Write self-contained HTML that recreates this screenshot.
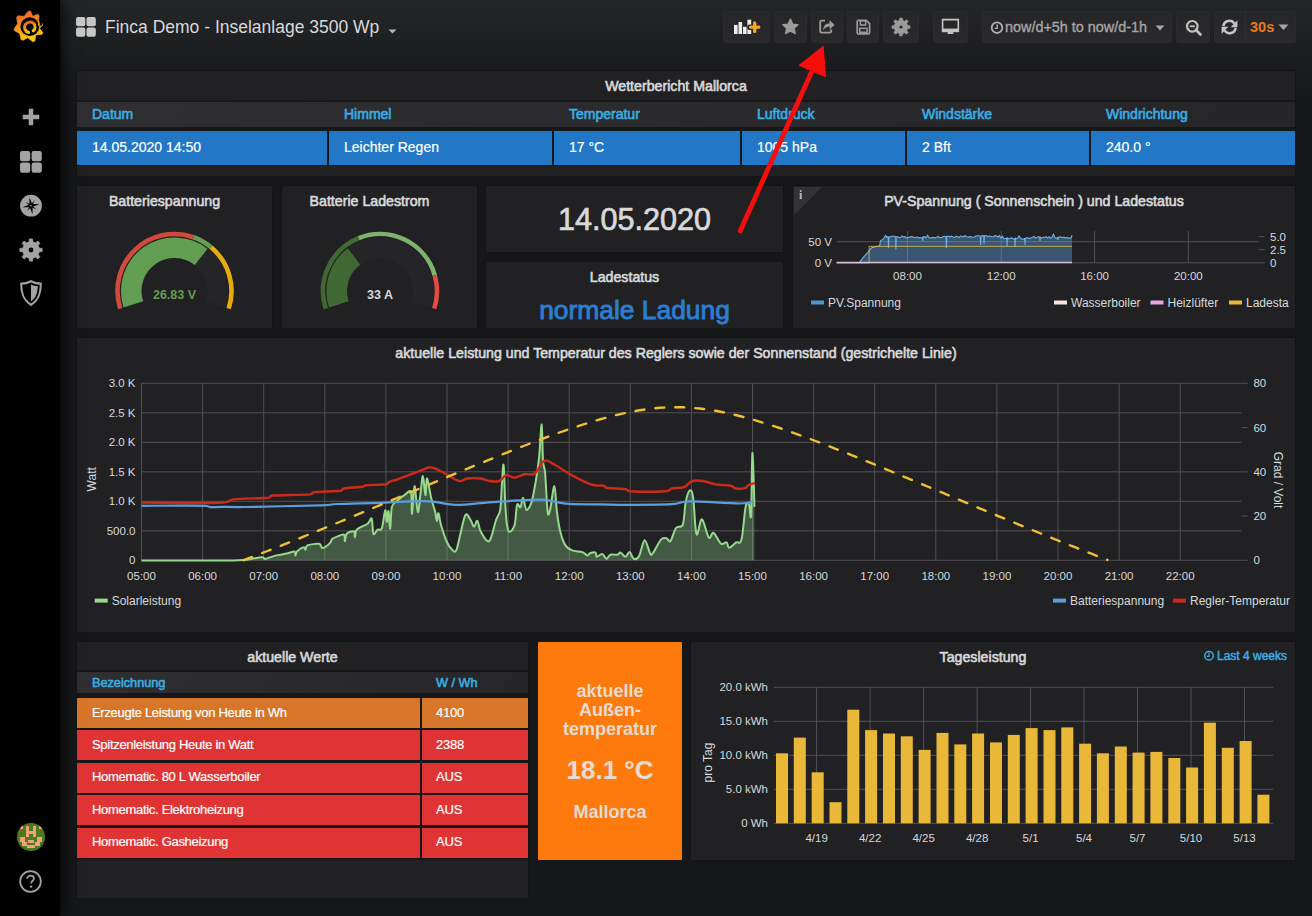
<!DOCTYPE html>
<html><head><meta charset="utf-8"><title>Grafana</title>
<style>
*{box-sizing:border-box}
html,body{margin:0;padding:0}
body{width:1312px;height:916px;overflow:hidden;position:relative;font-family:"Liberation Sans", sans-serif;color:#d8d9da;
background:linear-gradient(180deg,#222426 10px,#161719 100px);}
.a{position:absolute}
.panel{position:absolute;background:#212124;border:1px solid #141414;border-radius:2px}
.ttl{position:absolute;left:0;right:0;top:5.6px;line-height:18px;padding-right:20px;text-align:center;font-size:14.2px;color:#d8d9da;-webkit-text-stroke:0.6px #d8d9da;white-space:nowrap}
.btn{position:absolute;top:11px;height:32px;border:1px solid #2b2b2e;border-radius:3px;background:linear-gradient(180deg,#262629,#2a2a2d)}
.t{position:absolute;white-space:nowrap}
</style></head><body>

<div class="a" style="left:0;top:0;width:60px;height:916px;background:#000;box-shadow:0 0 16px #000;z-index:5">
<svg class="a" style="left:0;top:0" width="60" height="50" viewBox="0 0 60 50">
<defs><linearGradient id="lg" x1="0" y1="0" x2="0.25" y2="1"><stop offset="0" stop-color="#f05a28"/><stop offset="0.55" stop-color="#f7931e"/><stop offset="1" stop-color="#fbca0a"/></linearGradient></defs>
<path fill="url(#lg)" stroke="url(#lg)" stroke-width="0.6" stroke-linejoin="round" d="M28.40 10.96 L30.58 11.11 L32.69 16.25 L37.69 14.27 L39.32 15.68 L38.20 21.17 L42.48 23.35 L42.80 25.34 L39.48 28.26 L42.90 32.46 L41.95 34.42 L35.89 34.92 L34.84 41.07 L32.77 41.83 L27.81 37.78 L22.84 40.37 L20.98 39.46 L19.63 33.57 L14.58 30.83 L14.12 28.86 L17.56 23.80 L16.54 17.34 L17.95 15.78 L24.20 16.22Z"/>
<circle cx="29.8" cy="26.6" r="9.4" fill="#000"/>
<path d="M36.5 20.5 L42.5 22 L42 25.5 L38.2 25.5Z" fill="#000"/>
<path fill="none" stroke="url(#lg)" stroke-width="3" stroke-linecap="round" d="M28.6 32.4 C25 31.6 23.6 27.8 25.2 24.8 C26.8 21.8 30.8 21.2 33.4 23.2 C35.8 25.2 35.6 29 33.2 30.8"/>
<path fill="none" stroke="url(#lg)" stroke-width="1.6" d="M37 19.6 C38.6 21.2 39.2 23.4 38.8 25.6"/>
</svg>
<svg class="a" style="left:22.3px;top:108px" width="18" height="18" viewBox="0 0 18 18"><path d="M7 1h4v6h6v4h-6v6h-4v-6h-6v-4h6z" fill="#a3a3a3" stroke="#a3a3a3" stroke-width="0.5" stroke-linejoin="round"/></svg>
<svg class="a" style="left:20px;top:151px" width="22" height="22" viewBox="0 0 22 22">
<rect x="0" y="0" width="10.2" height="10.2" rx="2.2" fill="#a3a3a3"/><rect x="11.6" y="0" width="10.2" height="10.2" rx="2.2" fill="#a3a3a3"/>
<rect x="0" y="11.6" width="10.2" height="10.2" rx="2.2" fill="#a3a3a3"/><rect x="11.6" y="11.6" width="10.2" height="10.2" rx="2.2" fill="#a3a3a3"/></svg>
<svg class="a" style="left:20px;top:194px" width="22" height="24" viewBox="0 0 22 24">
<circle cx="11" cy="11.7" r="10.9" fill="#a3a3a3"/>
<path d="M14.79 6.29 L12.18 11.49 L16.41 15.49 L11.21 12.88 L7.21 17.11 L9.82 11.91 L5.59 7.91 L10.79 10.52Z" fill="#000"/>
<path d="M9.51 3.23 L12.15 10.06 L19.47 10.21 L12.64 12.85 L12.49 20.17 L9.85 13.34 L2.53 13.19 L9.36 10.55Z" fill="#000"/>
<rect x="10.2" y="10.9" width="1.6" height="1.6" fill="#888"/></svg>
<svg class="a" style="left:19px;top:238px" width="24" height="24" viewBox="0 0 24 24"><path d="M20.20 10.17 L23.10 10.51 L23.10 13.49 L20.20 13.83 L19.09 16.50 L20.90 18.79 L18.79 20.90 L16.50 19.09 L13.83 20.20 L13.49 23.10 L10.51 23.10 L10.17 20.20 L7.50 19.09 L5.21 20.90 L3.10 18.79 L4.91 16.50 L3.80 13.83 L0.90 13.49 L0.90 10.51 L3.80 10.17 L4.91 7.50 L3.10 5.21 L5.21 3.10 L7.50 4.91 L10.17 3.80 L10.51 0.90 L13.49 0.90 L13.83 3.80 L16.50 4.91 L18.79 3.10 L20.90 5.21 L19.09 7.50Z" fill="#a3a3a3" stroke="#a3a3a3" stroke-width="0.8" stroke-linejoin="round"/><circle cx="12" cy="12" r="2.4" fill="#000"/></svg>
<svg class="a" style="left:20px;top:280px" width="22" height="26" viewBox="0 0 22 26">
<path d="M11 1.2 C7 3.2 4 3.6 1.2 3.6 C1.2 14 3.5 20.5 11 24.8 C18.5 20.5 20.8 14 20.8 3.6 C18 3.6 15 3.2 11 1.2 Z" fill="none" stroke="#a3a3a3" stroke-width="2.2" stroke-linejoin="round"/>
<path d="M11 4.5 L11 21.5 C16 18 17.6 13 17.8 6 C15.4 6 13.4 5.6 11 4.5Z" fill="#a3a3a3"/></svg>
<svg class="a" style="left:17px;top:823px" width="28" height="28" viewBox="0 0 28 28">
<defs><clipPath id="av"><circle cx="14" cy="14" r="14"/></clipPath></defs>
<g clip-path="url(#av)"><rect width="28" height="28" fill="#4d7a1c"/>
<g fill="#f0a07a">
<rect x="3" y="3" width="3" height="3"/><rect x="22" y="3" width="3" height="3"/>
<rect x="9" y="3" width="3" height="11"/><rect x="16" y="3" width="3" height="11"/><rect x="9" y="8" width="10" height="3"/>
<rect x="3" y="14" width="5" height="5"/><rect x="20" y="14" width="5" height="5"/>
<rect x="5" y="19" width="5" height="4"/><rect x="18" y="19" width="5" height="4"/>
<rect x="11" y="17" width="6" height="3"/><rect x="10" y="22" width="8" height="3"/>
</g></g></svg>
<svg class="a" style="left:19px;top:870px" width="23" height="23" viewBox="0 0 23 23">
<circle cx="11.5" cy="11.5" r="10.3" fill="none" stroke="#a3a3a3" stroke-width="1.8"/>
<path d="M8.3 8.8 C8.3 6.6 10 5.6 11.6 5.6 C13.4 5.6 14.9 6.8 14.9 8.6 C14.9 10.8 12.2 11 12.2 13.4" fill="none" stroke="#a3a3a3" stroke-width="1.8"/>
<circle cx="12.1" cy="16.6" r="1.2" fill="#a3a3a3"/></svg>
</div>
<svg class="a" style="left:76px;top:17px" width="20" height="20" viewBox="0 0 20 20">
<rect x="0" y="0" width="9.3" height="9.3" rx="2" fill="#c7c7c7"/><rect x="10.5" y="0" width="9.3" height="9.3" rx="2" fill="#c7c7c7"/>
<rect x="0" y="10.5" width="9.3" height="9.3" rx="2" fill="#c7c7c7"/><rect x="10.5" y="10.5" width="9.3" height="9.3" rx="2" fill="#c7c7c7"/></svg>
<div class="t" style="left:105px;top:16px;font-size:17.5px;line-height:22px;color:#d8d9da">Finca Demo - Inselanlage 3500 Wp</div>
<svg class="a" style="left:388px;top:29px" width="9" height="5" viewBox="0 0 9 5"><path d="M0.5 0.5 L8.5 0.5 L4.5 4.5Z" fill="#b5b5b5"/></svg>
<div class="btn" style="left:723px;width:47px"></div>
<div class="btn" style="left:774px;width:33px"></div>
<div class="btn" style="left:811px;width:32px"></div>
<div class="btn" style="left:847px;width:32px"></div>
<div class="btn" style="left:883px;width:36px"></div>
<div class="btn" style="left:933px;width:35px"></div>
<svg class="a" style="left:0;top:0;z-index:3" width="1000" height="50" viewBox="0 0 1000 50">
<rect x="734" y="24.9" width="3.6" height="9.1" fill="#ececec"/><rect x="738.5" y="22" width="3.6" height="12" fill="#ececec"/>
<rect x="743" y="26.8" width="3.6" height="7.2" fill="#ececec"/><rect x="747.4" y="19.7" width="3.8" height="14.3" fill="#ececec"/>
<path d="M754.7 22.3 V32.2 M749.9 27.2 H759.5" stroke="#26262a" stroke-width="5.6" stroke-linecap="round"/>
<path d="M754.7 23 V31.5 M750.6 27.2 H758.8" stroke="#f4a81c" stroke-width="3.3" stroke-linecap="round"/>
<path d="M790.4 19.3 L792.6 24.2 L797.9 24.7 L793.9 28.3 L795.1 33.4 L790.4 30.7 L785.7 33.4 L786.9 28.3 L782.9 24.7 L788.2 24.2 Z" fill="#9b9b9b" stroke="#9b9b9b" stroke-linejoin="round" stroke-width="1.6"/>
<path d="M825 20.6 H821.6 Q820.2 20.6 820.2 22 V31.2 Q820.2 32.6 821.6 32.6 H829.8 Q831.2 32.6 831.2 31.2 V29.6" fill="none" stroke="#9b9b9b" stroke-width="1.9"/>
<path d="M823.2 30.6 C823.2 25.2 826.2 23.4 829.6 23.4 V20.2 L834.6 24.9 L829.6 29.4 V26.6 C827 26.6 824.8 27.6 823.2 30.6Z" fill="#9b9b9b"/>
<path d="M857.2 21.4 Q857.2 20.3 858.3 20.3 H866.3 L869.6 23.6 V32.8 Q869.6 33.9 868.5 33.9 H858.3 Q857.2 33.9 857.2 32.8Z" fill="none" stroke="#9b9b9b" stroke-width="1.7"/>
<rect x="860.4" y="20.8" width="5.2" height="4.2" fill="none" stroke="#9b9b9b" stroke-width="1.5"/>
<rect x="859.8" y="28.3" width="7.2" height="4" fill="none" stroke="#9b9b9b" stroke-width="1.5"/>
<path d="M907.64 25.52 L909.92 25.80 L909.92 28.20 L907.64 28.48 L906.74 30.64 L908.15 32.46 L906.46 34.15 L904.64 32.74 L902.48 33.64 L902.20 35.92 L899.80 35.92 L899.52 33.64 L897.36 32.74 L895.54 34.15 L893.85 32.46 L895.26 30.64 L894.36 28.48 L892.08 28.20 L892.08 25.80 L894.36 25.52 L895.26 23.36 L893.85 21.54 L895.54 19.85 L897.36 21.26 L899.52 20.36 L899.80 18.08 L902.20 18.08 L902.48 20.36 L904.64 21.26 L906.46 19.85 L908.15 21.54 L906.74 23.36Z" fill="#9b9b9b" stroke="#9b9b9b" stroke-width="0.8" stroke-linejoin="round"/><circle cx="901" cy="27" r="1.6" fill="#28282b"/>
<path d="M942.6 19.6 H958.3 V31.2 H942.6Z" fill="none" stroke="#c4c4c4" stroke-width="1.6"/>
<rect x="942" y="28.6" width="17" height="3.6" fill="#c4c4c4"/>
<path d="M948 32 H953 L953.6 33.9 H947.4Z" fill="#c4c4c4"/>
</svg>
<div class="btn" style="left:982px;width:190px"><svg class="a" style="left:7px;top:9px" width="14" height="14" viewBox="0 0 14 14"><circle cx="7" cy="6.7" r="5.3" fill="none" stroke="#b0b0b0" stroke-width="1.8"/><path d="M7.2 3.6 V7.4 H4.6" fill="none" stroke="#b0b0b0" stroke-width="1.4"/></svg>
<div class="t" style="left:22px;top:7px;font-size:14.4px;line-height:17px;color:#a8a8a8;-webkit-text-stroke:0.3px #a8a8a8">now/d+5h to now/d-1h</div>
<svg class="a" style="left:172px;top:13px" width="10" height="6" viewBox="0 0 10 6"><path d="M0.5 0.5 H9.5 L5 5.5Z" fill="#a8a8a8"/></svg></div>
<div class="btn" style="left:1176px;width:34px"><svg class="a" style="left:8px;top:7px" width="18" height="18" viewBox="0 0 18 18"><circle cx="7.3" cy="7.3" r="5.3" fill="none" stroke="#c2c2c2" stroke-width="2.2"/><path d="M4.8 7.3 H9.8" stroke="#c2c2c2" stroke-width="1.8"/><path d="M11 11 L15.5 15.5" stroke="#c2c2c2" stroke-width="2.6" stroke-linecap="round"/></svg></div>
<div class="btn" style="left:1214px;width:82px"><div class="a" style="left:30px;top:0;width:1px;height:30px;background:#2f2f32"></div>

<div class="t" style="left:35px;top:7px;font-size:14.5px;line-height:17px;font-weight:bold;color:#eb7b18">30s</div>
<svg class="a" style="left:63px;top:12px" width="11" height="7" viewBox="0 0 11 7"><path d="M0.5 0.5 H10.5 L5.5 6Z" fill="#a8a8a8"/></svg></div>
<svg class="a" style="left:1210px;top:10px;z-index:3" width="40" height="34" viewBox="1210 10 40 34">
<path d="M1223.4 26.2 A6 6 0 0 1 1234.4 23.6" fill="none" stroke="#c4c4c4" stroke-width="2.6"/>
<path d="M1237.4 20.2 L1237.4 27.2 L1230.6 27.2Z" fill="#c4c4c4"/>
<path d="M1235.6 27.8 A6 6 0 0 1 1224.6 30.4" fill="none" stroke="#c4c4c4" stroke-width="2.6"/>
<path d="M1221.6 33.8 L1221.6 26.8 L1228.4 26.8Z" fill="#c4c4c4"/>
</svg>
<div class="panel" style="left:76px;top:70px;width:1220px;height:107px;"><div class="ttl">Wetterbericht Mallorca</div><div class="a" style="left:0;top:28.5px;width:1218px;height:66px;background:#161719"></div><div class="a" style="left:0;top:30.5px;width:1218px;height:25px;background:linear-gradient(135deg,#2f2f32,#262628)"></div><div class="t" style="left:15px;top:35px;font-size:14px;line-height:16px;color:#3aaee2;-webkit-text-stroke:0.6px #3aaee2">Datum</div><div class="a" style="left:0px;top:60px;width:250px;height:33.5px;background:#2277c6"></div><div class="t" style="left:15px;top:68px;font-size:14px;line-height:16px;color:#fff;-webkit-text-stroke:0.2px #fff">14.05.2020 14:50</div><div class="t" style="left:267px;top:35px;font-size:14px;line-height:16px;color:#3aaee2;-webkit-text-stroke:0.6px #3aaee2">Himmel</div><div class="a" style="left:252px;top:60px;width:223px;height:33.5px;background:#2277c6"></div><div class="t" style="left:267px;top:68px;font-size:14px;line-height:16px;color:#fff;-webkit-text-stroke:0.2px #fff">Leichter Regen</div><div class="t" style="left:492px;top:35px;font-size:14px;line-height:16px;color:#3aaee2;-webkit-text-stroke:0.6px #3aaee2">Temperatur</div><div class="a" style="left:477px;top:60px;width:186px;height:33.5px;background:#2277c6"></div><div class="t" style="left:492px;top:68px;font-size:14px;line-height:16px;color:#fff;-webkit-text-stroke:0.2px #fff">17 °C</div><div class="t" style="left:680px;top:35px;font-size:14px;line-height:16px;color:#3aaee2;-webkit-text-stroke:0.6px #3aaee2">Luftdruck</div><div class="a" style="left:665px;top:60px;width:163px;height:33.5px;background:#2277c6"></div><div class="t" style="left:680px;top:68px;font-size:14px;line-height:16px;color:#fff;-webkit-text-stroke:0.2px #fff">1005 hPa</div><div class="t" style="left:845px;top:35px;font-size:14px;line-height:16px;color:#3aaee2;-webkit-text-stroke:0.6px #3aaee2">Windstärke</div><div class="a" style="left:830px;top:60px;width:182px;height:33.5px;background:#2277c6"></div><div class="t" style="left:845px;top:68px;font-size:14px;line-height:16px;color:#fff;-webkit-text-stroke:0.2px #fff">2 Bft</div><div class="t" style="left:1029px;top:35px;font-size:14px;line-height:16px;color:#3aaee2;-webkit-text-stroke:0.6px #3aaee2">Windrichtung</div><div class="a" style="left:1014px;top:60px;width:204px;height:33.5px;background:#2277c6"></div><div class="t" style="left:1029px;top:68px;font-size:14px;line-height:16px;color:#fff;-webkit-text-stroke:0.2px #fff">240.0 °</div></div>
<div class="panel" style="left:76px;top:185px;width:197px;height:144px;"><div class="ttl">Batteriespannung</div><svg class="a" style="left:0;top:0" width="195" height="142"><path d="M46.52 121.56 A53.6 53.6 0 1 1 148.48 121.56 L128.88 115.20 A33 33 0 1 0 66.12 115.20 Z" fill="#252527"/><path d="M46.52 121.56 A53.6 53.6 0 0 1 130.50 62.76 L117.82 79.00 A33 33 0 0 0 66.12 115.20 Z" fill="#629e51"/><path d="M43.29 122.61 A57 57 0 0 1 116.53 51.27" fill="none" stroke="#d44a3a" stroke-width="4.6"/><path d="M116.53 51.27 A57 57 0 0 1 134.14 61.34" fill="none" stroke="#629e51" stroke-width="4.6"/><path d="M134.14 61.34 A57 57 0 0 1 151.71 122.61" fill="none" stroke="#e5ac0e" stroke-width="4.6"/><text x="97.5" y="112.6" text-anchor="middle" font-family="Liberation Sans" font-weight="bold" font-size="12.5" fill="#629e51">26.83 V</text></svg></div>
<div class="panel" style="left:281px;top:185px;width:197px;height:144px;"><div class="ttl">Batterie Ladestrom</div><svg class="a" style="left:0;top:0" width="195" height="142"><path d="M47.02 121.56 A53.6 53.6 0 1 1 148.98 121.56 L129.38 115.20 A33 33 0 1 0 66.62 115.20 Z" fill="#252527"/><path d="M47.02 121.56 A53.6 53.6 0 0 1 65.74 62.19 L78.14 78.65 A33 33 0 0 0 66.62 115.20 Z" fill="#3f6833"/><path d="M43.79 122.61 A57 57 0 0 1 76.65 52.15" fill="none" stroke="#3f6833" stroke-width="4.6"/><path d="M76.65 52.15 A57 57 0 0 1 152.79 89.29" fill="none" stroke="#7eb26d" stroke-width="4.6"/><path d="M152.79 89.29 A57 57 0 0 1 152.21 122.61" fill="none" stroke="#e24d42" stroke-width="4.6"/><text x="98" y="112.6" text-anchor="middle" font-family="Liberation Sans" font-weight="bold" font-size="12.5" fill="#d8d9da">33 A</text></svg></div>
<div class="panel" style="left:485px;top:185px;width:299px;height:68px;"><div class="t" style="left:0;right:0;top:15.5px;text-align:center;font-size:30.6px;line-height:34px;color:#d8d9da;-webkit-text-stroke:0.7px #d8d9da">14.05.2020</div></div>
<div class="panel" style="left:485px;top:261px;width:299px;height:68px;"><div class="ttl">Ladestatus</div><div class="t" style="left:0;right:0;top:33px;text-align:center;font-size:26.4px;line-height:30px;color:#2a7ed2;-webkit-text-stroke:0.9px #2a7ed2">normale Ladung</div></div>
<div class="panel" style="left:792px;top:185px;width:504px;height:144px;overflow:hidden"><div class="ttl">PV-Spannung ( Sonnenschein ) und Ladestatus</div><svg class="a" style="left:0;top:0" width="0" height="0"></svg><svg class="a" style="left:0;top:0" width="502" height="142" viewBox="793 186 502 142"><path d="M794 187 L822 187 L794 215Z" fill="#333336"/><text x="799" y="199" font-family="Liberation Serif" font-weight="bold" font-size="12" fill="#bdbdbd">i</text><line x1="836.6" y1="241.7" x2="1258.8" y2="241.7" stroke="#525255" stroke-width="1"/><line x1="836.6" y1="262.8" x2="1258.8" y2="262.8" stroke="#525255" stroke-width="1"/><line x1="907.5" y1="231" x2="907.5" y2="262.8" stroke="#525255" stroke-width="1"/><line x1="1001.2" y1="231" x2="1001.2" y2="262.8" stroke="#525255" stroke-width="1"/><line x1="1094.6" y1="231" x2="1094.6" y2="262.8" stroke="#525255" stroke-width="1"/><line x1="1188.3" y1="231" x2="1188.3" y2="262.8" stroke="#525255" stroke-width="1"/><line x1="1258.8" y1="236.7" x2="1264.8" y2="236.7" stroke="#525255" stroke-width="1"/><line x1="1258.8" y1="249.7" x2="1264.8" y2="249.7" stroke="#525255" stroke-width="1"/><line x1="1258.8" y1="262.8" x2="1264.8" y2="262.8" stroke="#525255" stroke-width="1"/><path d="M836.6 262.8 L857.0 262.8 L859.7 262.4 L863.0 257.5 L867.7 252.7 L871.6 247.8 L875.0 247.0 L879.6 245.8 L880.5 240.9 L883.5 238.9 L885.5 235.5 L886.5 237.2 L887.0 236.7 L888.2 237.0 L888.5 248.0 L888.9 237.0 L888.5 237.4 L890.0 237.2 L891.5 236.3 L893.0 236.3 L894.5 236.4 L895.6 237.2 L895.9 249.5 L896.3 237.2 L896.0 237.1 L897.5 236.6 L899.0 237.5 L900.5 237.4 L902.0 235.9 L903.5 236.9 L905.0 236.7 L906.5 237.9 L908.0 237.5 L909.5 237.1 L911.0 236.6 L912.5 236.9 L914.0 237.3 L915.5 237.6 L917.0 237.0 L918.5 237.8 L920.0 237.5 L921.5 238.1 L922.4 237.4 L922.7 241.0 L923.1 237.4 L923.0 237.0 L924.5 236.7 L926.0 237.8 L927.5 235.3 L929.0 237.8 L930.5 238.0 L932.0 237.6 L933.5 237.4 L935.0 237.9 L936.5 237.2 L938.0 236.4 L939.5 237.4 L941.0 237.7 L942.5 236.9 L944.0 236.2 L945.5 236.4 L946.1 237.0 L946.4 248.0 L946.8 237.0 L947.0 236.2 L948.5 236.3 L950.0 236.8 L951.5 236.2 L953.0 237.0 L954.5 237.4 L956.0 236.4 L957.5 236.5 L959.0 237.6 L960.5 236.1 L962.0 236.2 L963.5 236.8 L965.0 235.7 L966.5 236.4 L968.0 237.4 L969.5 236.6 L971.0 236.9 L972.5 237.2 L974.0 237.2 L975.5 236.3 L977.0 235.7 L978.5 235.7 L980.0 235.9 L980.3 236.4 L980.6 245.0 L981.0 236.4 L981.5 236.1 L983.0 235.5 L983.7 236.4 L984.0 244.0 L984.4 236.4 L984.5 235.7 L986.0 235.5 L987.5 236.6 L989.0 236.0 L990.5 236.2 L992.0 237.0 L993.5 236.4 L995.0 235.7 L996.5 236.1 L998.0 237.0 L999.5 235.6 L1001.0 238.0 L1002.5 236.3 L1004.0 238.9 L1005.5 238.4 L1006.7 238.0 L1007.0 246.0 L1007.4 238.0 L1007.0 237.8 L1008.5 238.6 L1010.0 238.6 L1011.5 237.6 L1013.0 239.0 L1014.5 238.7 L1014.7 238.2 L1015.0 247.0 L1015.4 238.2 L1016.0 238.7 L1017.5 238.3 L1019.0 236.0 L1020.5 237.9 L1022.0 239.2 L1023.5 239.2 L1024.7 238.4 L1025.0 245.0 L1025.4 238.4 L1025.0 239.2 L1026.5 237.9 L1028.0 237.9 L1029.5 238.7 L1031.0 237.7 L1032.5 237.3 L1034.0 236.4 L1035.5 237.9 L1037.0 237.6 L1038.5 236.6 L1039.7 237.2 L1040.0 241.0 L1040.4 237.2 L1040.0 236.9 L1041.5 238.1 L1043.0 237.1 L1044.5 237.7 L1046.0 236.6 L1047.5 238.0 L1049.0 236.7 L1050.5 238.2 L1052.0 237.1 L1053.5 234.3 L1055.0 237.7 L1056.5 238.2 L1057.7 237.4 L1058.0 240.0 L1058.4 237.4 L1058.0 238.1 L1059.5 236.9 L1061.0 237.0 L1062.5 237.6 L1064.0 237.2 L1065.5 238.1 L1067.0 237.3 L1068.5 238.1 L1070.0 238.1 L1071.5 237.4 L1072.0 235.0 L1072 262.8 Z" fill="#60a6e2" fill-opacity="0.4"/><path d="M857.0 262.8 L859.7 262.4 L863.0 257.5 L867.7 252.7 L871.6 247.8 L875.0 247.0 L879.6 245.8 L880.5 240.9 L883.5 238.9 L885.5 235.5 L886.5 237.2 L887.0 236.7 L888.2 237.0 L888.5 248.0 L888.9 237.0 L888.5 237.4 L890.0 237.2 L891.5 236.3 L893.0 236.3 L894.5 236.4 L895.6 237.2 L895.9 249.5 L896.3 237.2 L896.0 237.1 L897.5 236.6 L899.0 237.5 L900.5 237.4 L902.0 235.9 L903.5 236.9 L905.0 236.7 L906.5 237.9 L908.0 237.5 L909.5 237.1 L911.0 236.6 L912.5 236.9 L914.0 237.3 L915.5 237.6 L917.0 237.0 L918.5 237.8 L920.0 237.5 L921.5 238.1 L922.4 237.4 L922.7 241.0 L923.1 237.4 L923.0 237.0 L924.5 236.7 L926.0 237.8 L927.5 235.3 L929.0 237.8 L930.5 238.0 L932.0 237.6 L933.5 237.4 L935.0 237.9 L936.5 237.2 L938.0 236.4 L939.5 237.4 L941.0 237.7 L942.5 236.9 L944.0 236.2 L945.5 236.4 L946.1 237.0 L946.4 248.0 L946.8 237.0 L947.0 236.2 L948.5 236.3 L950.0 236.8 L951.5 236.2 L953.0 237.0 L954.5 237.4 L956.0 236.4 L957.5 236.5 L959.0 237.6 L960.5 236.1 L962.0 236.2 L963.5 236.8 L965.0 235.7 L966.5 236.4 L968.0 237.4 L969.5 236.6 L971.0 236.9 L972.5 237.2 L974.0 237.2 L975.5 236.3 L977.0 235.7 L978.5 235.7 L980.0 235.9 L980.3 236.4 L980.6 245.0 L981.0 236.4 L981.5 236.1 L983.0 235.5 L983.7 236.4 L984.0 244.0 L984.4 236.4 L984.5 235.7 L986.0 235.5 L987.5 236.6 L989.0 236.0 L990.5 236.2 L992.0 237.0 L993.5 236.4 L995.0 235.7 L996.5 236.1 L998.0 237.0 L999.5 235.6 L1001.0 238.0 L1002.5 236.3 L1004.0 238.9 L1005.5 238.4 L1006.7 238.0 L1007.0 246.0 L1007.4 238.0 L1007.0 237.8 L1008.5 238.6 L1010.0 238.6 L1011.5 237.6 L1013.0 239.0 L1014.5 238.7 L1014.7 238.2 L1015.0 247.0 L1015.4 238.2 L1016.0 238.7 L1017.5 238.3 L1019.0 236.0 L1020.5 237.9 L1022.0 239.2 L1023.5 239.2 L1024.7 238.4 L1025.0 245.0 L1025.4 238.4 L1025.0 239.2 L1026.5 237.9 L1028.0 237.9 L1029.5 238.7 L1031.0 237.7 L1032.5 237.3 L1034.0 236.4 L1035.5 237.9 L1037.0 237.6 L1038.5 236.6 L1039.7 237.2 L1040.0 241.0 L1040.4 237.2 L1040.0 236.9 L1041.5 238.1 L1043.0 237.1 L1044.5 237.7 L1046.0 236.6 L1047.5 238.0 L1049.0 236.7 L1050.5 238.2 L1052.0 237.1 L1053.5 234.3 L1055.0 237.7 L1056.5 238.2 L1057.7 237.4 L1058.0 240.0 L1058.4 237.4 L1058.0 238.1 L1059.5 236.9 L1061.0 237.0 L1062.5 237.6 L1064.0 237.2 L1065.5 238.1 L1067.0 237.3 L1068.5 238.1 L1070.0 238.1 L1071.5 237.4 L1072.0 235.0" fill="none" stroke="#6fb0e8" stroke-width="1.1"/><path d="M836.6 262.8 L869.1 262.8 L869.1 246.3 L1072 246.3" fill="none" stroke="#d9bb4a" stroke-opacity="0.7" stroke-width="1.2"/><path d="M836.6 262.6 L1072 262.6" fill="none" stroke="#d6c0da" stroke-width="1.5"/><text x="832" y="245.79999999999998" text-anchor="end" font-family="Liberation Sans" font-size="11.5" fill="#d8d9da">50 V</text><text x="832" y="266.90000000000003" text-anchor="end" font-family="Liberation Sans" font-size="11.5" fill="#d8d9da">0 V</text><text x="1270" y="240.79999999999998" font-family="Liberation Sans" font-size="11.5" fill="#d8d9da">5.0</text><text x="1270" y="253.79999999999998" font-family="Liberation Sans" font-size="11.5" fill="#d8d9da">2.5</text><text x="1270" y="266.90000000000003" font-family="Liberation Sans" font-size="11.5" fill="#d8d9da">0</text><text x="907.5" y="280.1" text-anchor="middle" font-family="Liberation Sans" font-size="11.5" fill="#d8d9da">08:00</text><text x="1001.2" y="280.1" text-anchor="middle" font-family="Liberation Sans" font-size="11.5" fill="#d8d9da">12:00</text><text x="1094.6" y="280.1" text-anchor="middle" font-family="Liberation Sans" font-size="11.5" fill="#d8d9da">16:00</text><text x="1188.3" y="280.1" text-anchor="middle" font-family="Liberation Sans" font-size="11.5" fill="#d8d9da">20:00</text><rect x="811" y="300.5" width="13" height="4" fill="#5195ce"/><text x="828" y="306.8" font-family="Liberation Sans" font-size="12" fill="#d8d9da">PV.Spannung</text><rect x="1054" y="300.5" width="13" height="4" fill="#fce2de"/><text x="1071" y="306.8" font-family="Liberation Sans" font-size="12" fill="#d8d9da">Wasserboiler</text><rect x="1150.5" y="300.5" width="13" height="4" fill="#e5a8e2"/><text x="1167.5" y="306.8" font-family="Liberation Sans" font-size="12" fill="#d8d9da">Heizlüfter</text><rect x="1229" y="300.5" width="13" height="4" fill="#eab839"/><text x="1246" y="306.8" font-family="Liberation Sans" font-size="12" fill="#d8d9da">Ladesta</text></svg></div>
<div class="panel" style="left:76px;top:337px;width:1220px;height:296px;"><div class="ttl">aktuelle Leistung und Temperatur des Reglers sowie der Sonnenstand (gestrichelte Linie)</div><svg class="a" style="left:0;top:0" width="1218" height="294" viewBox="77 338 1218 294"><line x1="141.5" y1="383.3" x2="1241.6" y2="383.3" stroke="#525255" stroke-width="1"/><line x1="141.5" y1="412.8" x2="1241.6" y2="412.8" stroke="#525255" stroke-width="1"/><line x1="141.5" y1="442.3" x2="1241.6" y2="442.3" stroke="#525255" stroke-width="1"/><line x1="141.5" y1="471.8" x2="1241.6" y2="471.8" stroke="#525255" stroke-width="1"/><line x1="141.5" y1="501.3" x2="1241.6" y2="501.3" stroke="#525255" stroke-width="1"/><line x1="141.5" y1="530.8" x2="1241.6" y2="530.8" stroke="#525255" stroke-width="1"/><line x1="141.5" y1="560.3" x2="1241.6" y2="560.3" stroke="#525255" stroke-width="1"/><line x1="141.5" y1="383.3" x2="141.5" y2="560.3" stroke="#525255" stroke-width="1"/><line x1="202.6" y1="383.3" x2="202.6" y2="560.3" stroke="#525255" stroke-width="1"/><line x1="263.7" y1="383.3" x2="263.7" y2="560.3" stroke="#525255" stroke-width="1"/><line x1="324.8" y1="383.3" x2="324.8" y2="560.3" stroke="#525255" stroke-width="1"/><line x1="385.9" y1="383.3" x2="385.9" y2="560.3" stroke="#525255" stroke-width="1"/><line x1="447.0" y1="383.3" x2="447.0" y2="560.3" stroke="#525255" stroke-width="1"/><line x1="508.1" y1="383.3" x2="508.1" y2="560.3" stroke="#525255" stroke-width="1"/><line x1="569.2" y1="383.3" x2="569.2" y2="560.3" stroke="#525255" stroke-width="1"/><line x1="630.3" y1="383.3" x2="630.3" y2="560.3" stroke="#525255" stroke-width="1"/><line x1="691.4" y1="383.3" x2="691.4" y2="560.3" stroke="#525255" stroke-width="1"/><line x1="752.5" y1="383.3" x2="752.5" y2="560.3" stroke="#525255" stroke-width="1"/><line x1="813.6" y1="383.3" x2="813.6" y2="560.3" stroke="#525255" stroke-width="1"/><line x1="874.7" y1="383.3" x2="874.7" y2="560.3" stroke="#525255" stroke-width="1"/><line x1="935.8" y1="383.3" x2="935.8" y2="560.3" stroke="#525255" stroke-width="1"/><line x1="996.9" y1="383.3" x2="996.9" y2="560.3" stroke="#525255" stroke-width="1"/><line x1="1058.0" y1="383.3" x2="1058.0" y2="560.3" stroke="#525255" stroke-width="1"/><line x1="1119.1" y1="383.3" x2="1119.1" y2="560.3" stroke="#525255" stroke-width="1"/><line x1="1180.2" y1="383.3" x2="1180.2" y2="560.3" stroke="#525255" stroke-width="1"/><line x1="1241.6" y1="560.3" x2="1247.6" y2="560.3" stroke="#525255" stroke-width="1"/><line x1="1241.6" y1="516.0" x2="1247.6" y2="516.0" stroke="#525255" stroke-width="1"/><line x1="1241.6" y1="471.8" x2="1247.6" y2="471.8" stroke="#525255" stroke-width="1"/><line x1="1241.6" y1="427.5" x2="1247.6" y2="427.5" stroke="#525255" stroke-width="1"/><line x1="1241.6" y1="383.3" x2="1247.6" y2="383.3" stroke="#525255" stroke-width="1"/><text x="135.5" y="564.4" text-anchor="end" font-family="Liberation Sans" font-size="11.5" fill="#d8d9da">0</text><text x="135.5" y="534.9" text-anchor="end" font-family="Liberation Sans" font-size="11.5" fill="#d8d9da">500.0</text><text x="135.5" y="505.4" text-anchor="end" font-family="Liberation Sans" font-size="11.5" fill="#d8d9da">1.0 K</text><text x="135.5" y="475.9" text-anchor="end" font-family="Liberation Sans" font-size="11.5" fill="#d8d9da">1.5 K</text><text x="135.5" y="446.4" text-anchor="end" font-family="Liberation Sans" font-size="11.5" fill="#d8d9da">2.0 K</text><text x="135.5" y="416.9" text-anchor="end" font-family="Liberation Sans" font-size="11.5" fill="#d8d9da">2.5 K</text><text x="135.5" y="387.4" text-anchor="end" font-family="Liberation Sans" font-size="11.5" fill="#d8d9da">3.0 K</text><text x="1253.4" y="564.4" font-family="Liberation Sans" font-size="11.5" fill="#d8d9da">0</text><text x="1253.4" y="520.1" font-family="Liberation Sans" font-size="11.5" fill="#d8d9da">20</text><text x="1253.4" y="475.9" font-family="Liberation Sans" font-size="11.5" fill="#d8d9da">40</text><text x="1253.4" y="431.6" font-family="Liberation Sans" font-size="11.5" fill="#d8d9da">60</text><text x="1253.4" y="387.4" font-family="Liberation Sans" font-size="11.5" fill="#d8d9da">80</text><text x="141.5" y="579.8" text-anchor="middle" font-family="Liberation Sans" font-size="11.5" fill="#d8d9da">05:00</text><text x="202.6" y="579.8" text-anchor="middle" font-family="Liberation Sans" font-size="11.5" fill="#d8d9da">06:00</text><text x="263.7" y="579.8" text-anchor="middle" font-family="Liberation Sans" font-size="11.5" fill="#d8d9da">07:00</text><text x="324.8" y="579.8" text-anchor="middle" font-family="Liberation Sans" font-size="11.5" fill="#d8d9da">08:00</text><text x="385.9" y="579.8" text-anchor="middle" font-family="Liberation Sans" font-size="11.5" fill="#d8d9da">09:00</text><text x="447.0" y="579.8" text-anchor="middle" font-family="Liberation Sans" font-size="11.5" fill="#d8d9da">10:00</text><text x="508.1" y="579.8" text-anchor="middle" font-family="Liberation Sans" font-size="11.5" fill="#d8d9da">11:00</text><text x="569.2" y="579.8" text-anchor="middle" font-family="Liberation Sans" font-size="11.5" fill="#d8d9da">12:00</text><text x="630.3" y="579.8" text-anchor="middle" font-family="Liberation Sans" font-size="11.5" fill="#d8d9da">13:00</text><text x="691.4" y="579.8" text-anchor="middle" font-family="Liberation Sans" font-size="11.5" fill="#d8d9da">14:00</text><text x="752.5" y="579.8" text-anchor="middle" font-family="Liberation Sans" font-size="11.5" fill="#d8d9da">15:00</text><text x="813.6" y="579.8" text-anchor="middle" font-family="Liberation Sans" font-size="11.5" fill="#d8d9da">16:00</text><text x="874.7" y="579.8" text-anchor="middle" font-family="Liberation Sans" font-size="11.5" fill="#d8d9da">17:00</text><text x="935.8" y="579.8" text-anchor="middle" font-family="Liberation Sans" font-size="11.5" fill="#d8d9da">18:00</text><text x="996.9" y="579.8" text-anchor="middle" font-family="Liberation Sans" font-size="11.5" fill="#d8d9da">19:00</text><text x="1058.0" y="579.8" text-anchor="middle" font-family="Liberation Sans" font-size="11.5" fill="#d8d9da">20:00</text><text x="1119.1" y="579.8" text-anchor="middle" font-family="Liberation Sans" font-size="11.5" fill="#d8d9da">21:00</text><text x="1180.2" y="579.8" text-anchor="middle" font-family="Liberation Sans" font-size="11.5" fill="#d8d9da">22:00</text><text transform="translate(96.3 479.3) rotate(-90)" text-anchor="middle" font-family="Liberation Sans" font-size="12" fill="#d8d9da">Watt</text><text transform="translate(1274 480) rotate(90)" text-anchor="middle" font-family="Liberation Sans" font-size="12" fill="#d8d9da">Grad / Volt</text><path d="M141.50 560.60 C154.58 560.60 204.12 560.65 220.00 560.60 C235.88 560.55 232.60 560.43 236.80 560.30 C241.00 560.17 241.00 560.30 245.20 559.80 C249.40 559.30 258.65 557.45 262.00 557.30 C265.30 557.15 263.08 559.18 265.30 558.90 C267.52 558.62 271.68 556.48 275.30 555.60 C278.92 554.72 283.78 554.30 287.00 553.60 C290.22 552.90 293.18 551.07 294.60 551.40 C295.50 551.73 295.10 555.60 295.50 555.60 C295.90 555.60 295.62 552.80 297.00 551.40 C298.38 550.00 302.38 547.48 303.80 547.20 C305.22 546.92 304.93 549.98 305.50 549.70 C306.07 549.42 305.50 546.48 307.20 545.50 C309.45 544.52 316.48 543.38 319.00 543.80 C321.52 544.22 320.92 547.72 322.30 548.00 C323.68 548.28 325.90 546.47 327.30 545.50 C328.70 544.53 329.87 543.32 330.70 542.20 C331.53 541.08 330.70 540.07 332.30 538.80 C334.52 537.53 341.88 534.18 344.00 534.60 C345.00 535.02 344.57 541.43 345.00 541.30 C345.43 541.17 345.08 535.47 346.60 533.80 C348.12 532.13 352.70 530.75 354.10 531.30 C355.00 531.85 354.57 537.38 355.00 537.10 C355.43 536.82 355.00 531.83 356.70 529.60 C358.80 527.37 365.10 525.52 367.60 523.70 C370.10 521.88 370.73 517.02 371.70 518.70 C372.67 520.38 372.42 531.98 373.40 533.80 C374.38 535.62 376.20 530.50 377.60 529.60 C379.00 528.70 380.53 531.62 381.80 528.40 C383.07 525.18 384.37 511.37 385.20 510.30 C386.03 509.23 386.25 521.87 386.80 522.00 C387.35 522.13 387.93 509.98 388.50 511.10 C389.07 512.22 389.63 529.38 390.20 528.70 C390.77 528.02 390.65 511.75 391.90 507.00 C393.15 502.25 395.62 502.17 397.70 500.20 C399.78 498.23 402.15 496.58 404.40 495.20 C406.65 493.82 409.93 488.82 411.20 491.90 C412.00 494.98 411.45 514.68 412.00 513.70 C412.55 512.72 413.53 486.28 414.50 486.00 C415.47 485.72 416.82 510.60 417.80 512.00 C418.78 513.40 419.55 500.42 420.40 494.40 C421.25 488.38 422.07 475.77 422.90 475.90 C423.73 476.03 424.70 494.78 425.40 495.20 C426.10 495.62 426.12 477.83 427.10 478.40 C428.08 478.97 429.97 493.08 431.30 498.60 C432.63 504.12 434.18 507.80 435.10 511.50 C436.02 515.20 436.23 520.52 436.80 520.80 C437.37 521.08 437.80 512.50 438.50 513.20 C439.20 513.90 439.60 520.20 441.00 525.00 C442.40 529.80 445.07 537.90 446.90 542.00 C448.73 546.10 450.45 548.20 452.00 549.60 C453.55 551.00 454.78 553.08 456.20 550.40 C457.62 547.72 458.95 539.42 460.50 533.50 C462.05 527.58 463.82 517.15 465.50 514.90 C467.18 512.65 469.18 518.02 470.60 520.00 C472.02 521.98 472.87 526.67 474.00 526.80 C475.13 526.93 476.27 519.97 477.40 520.80 C478.53 521.63 478.83 528.42 480.80 531.80 C482.77 535.18 486.67 543.07 489.20 541.10 C491.73 539.13 494.17 525.22 496.00 520.00 C497.83 514.78 499.22 515.73 500.20 509.80 C501.18 503.87 501.33 491.87 501.90 484.40 C502.47 476.93 503.03 461.60 503.60 465.00 C504.17 468.40 504.73 494.80 505.30 504.80 C505.87 514.80 506.30 520.50 507.00 525.00 C507.70 529.50 508.23 531.80 509.50 531.80 C510.77 531.80 513.33 529.50 514.60 525.00 C515.87 520.50 516.12 507.75 517.10 504.80 C518.08 501.85 519.50 508.43 520.50 507.30 C521.50 506.17 522.12 497.58 523.10 498.00 C524.08 498.42 525.00 509.10 526.40 509.80 C527.80 510.50 529.93 507.00 531.50 502.20 C533.07 497.40 534.53 488.47 535.80 481.00 C537.07 473.53 538.12 466.83 539.10 457.40 C540.08 447.97 541.05 423.83 541.70 424.40 C542.35 424.97 542.43 452.77 543.00 460.80 C543.57 468.83 544.33 464.15 545.10 472.60 C545.87 481.05 546.77 505.30 547.60 511.50 C548.43 517.70 548.97 514.03 550.10 509.80 C551.23 505.57 553.27 485.82 554.40 486.10 C555.53 486.38 555.92 503.88 556.90 511.50 C557.88 519.12 558.88 526.15 560.30 531.80 C561.72 537.45 563.43 542.30 565.40 545.40 C567.37 548.50 569.28 549.28 572.10 550.40 C574.92 551.52 579.75 551.25 582.30 552.10 C584.85 552.95 586.12 555.30 587.40 555.50 C588.68 555.70 588.65 553.78 590.00 553.30 C591.35 552.82 594.37 552.03 595.50 552.60 C596.63 553.17 595.67 556.47 596.80 556.70 C597.93 556.93 600.70 553.65 602.30 554.00 C603.90 554.35 605.03 558.68 606.40 558.80 C607.77 558.92 608.68 555.38 610.50 554.70 C612.32 554.02 615.60 555.05 617.30 554.70 C619.00 554.35 619.33 552.27 620.70 552.60 C622.07 552.93 624.02 556.82 625.50 556.70 C626.98 556.58 628.23 551.55 629.60 551.90 C630.97 552.25 632.12 558.12 633.70 558.80 C635.28 559.48 637.28 559.08 639.10 556.00 C640.92 552.92 642.77 540.75 644.60 540.30 C646.43 539.85 648.73 551.13 650.10 553.30 C651.47 555.47 650.98 555.58 652.80 553.30 C654.62 551.02 658.73 542.10 661.00 539.60 C663.27 537.10 664.82 538.07 666.40 538.30 C667.98 538.53 668.90 542.72 670.50 541.00 C672.10 539.28 673.95 530.73 676.00 528.00 C678.05 525.27 681.20 528.80 682.80 524.60 C684.40 520.40 684.47 508.48 685.60 502.80 C686.73 497.12 688.35 491.42 689.60 490.50 C690.85 489.58 691.95 490.02 693.10 497.30 C694.25 504.58 695.03 530.55 696.50 534.20 C697.97 537.85 699.85 518.63 701.90 519.20 C703.95 519.77 706.87 535.33 708.80 537.60 C710.73 539.87 711.47 531.78 713.50 532.80 C715.53 533.82 718.83 542.10 721.00 543.70 C723.17 545.30 725.13 541.72 726.50 542.40 C727.87 543.08 727.60 547.80 729.20 547.80 C730.80 547.80 734.05 543.77 736.10 542.40 C738.15 541.03 739.92 545.52 741.50 539.60 C743.08 533.68 744.35 512.80 745.60 506.90 C746.85 501.00 748.08 502.83 749.00 504.20 C749.92 505.57 750.53 523.63 751.10 515.10 C751.67 506.57 751.83 454.37 752.40 453.00 C752.97 451.63 754.15 497.92 754.50 506.90 L754.5 560.3 L141.5 560.3Z" fill="#96d98d" fill-opacity="0.3"/><path d="M141.50 560.60 C154.58 560.60 204.12 560.65 220.00 560.60 C235.88 560.55 232.60 560.43 236.80 560.30 C241.00 560.17 241.00 560.30 245.20 559.80 C249.40 559.30 258.65 557.45 262.00 557.30 C265.30 557.15 263.08 559.18 265.30 558.90 C267.52 558.62 271.68 556.48 275.30 555.60 C278.92 554.72 283.78 554.30 287.00 553.60 C290.22 552.90 293.18 551.07 294.60 551.40 C295.50 551.73 295.10 555.60 295.50 555.60 C295.90 555.60 295.62 552.80 297.00 551.40 C298.38 550.00 302.38 547.48 303.80 547.20 C305.22 546.92 304.93 549.98 305.50 549.70 C306.07 549.42 305.50 546.48 307.20 545.50 C309.45 544.52 316.48 543.38 319.00 543.80 C321.52 544.22 320.92 547.72 322.30 548.00 C323.68 548.28 325.90 546.47 327.30 545.50 C328.70 544.53 329.87 543.32 330.70 542.20 C331.53 541.08 330.70 540.07 332.30 538.80 C334.52 537.53 341.88 534.18 344.00 534.60 C345.00 535.02 344.57 541.43 345.00 541.30 C345.43 541.17 345.08 535.47 346.60 533.80 C348.12 532.13 352.70 530.75 354.10 531.30 C355.00 531.85 354.57 537.38 355.00 537.10 C355.43 536.82 355.00 531.83 356.70 529.60 C358.80 527.37 365.10 525.52 367.60 523.70 C370.10 521.88 370.73 517.02 371.70 518.70 C372.67 520.38 372.42 531.98 373.40 533.80 C374.38 535.62 376.20 530.50 377.60 529.60 C379.00 528.70 380.53 531.62 381.80 528.40 C383.07 525.18 384.37 511.37 385.20 510.30 C386.03 509.23 386.25 521.87 386.80 522.00 C387.35 522.13 387.93 509.98 388.50 511.10 C389.07 512.22 389.63 529.38 390.20 528.70 C390.77 528.02 390.65 511.75 391.90 507.00 C393.15 502.25 395.62 502.17 397.70 500.20 C399.78 498.23 402.15 496.58 404.40 495.20 C406.65 493.82 409.93 488.82 411.20 491.90 C412.00 494.98 411.45 514.68 412.00 513.70 C412.55 512.72 413.53 486.28 414.50 486.00 C415.47 485.72 416.82 510.60 417.80 512.00 C418.78 513.40 419.55 500.42 420.40 494.40 C421.25 488.38 422.07 475.77 422.90 475.90 C423.73 476.03 424.70 494.78 425.40 495.20 C426.10 495.62 426.12 477.83 427.10 478.40 C428.08 478.97 429.97 493.08 431.30 498.60 C432.63 504.12 434.18 507.80 435.10 511.50 C436.02 515.20 436.23 520.52 436.80 520.80 C437.37 521.08 437.80 512.50 438.50 513.20 C439.20 513.90 439.60 520.20 441.00 525.00 C442.40 529.80 445.07 537.90 446.90 542.00 C448.73 546.10 450.45 548.20 452.00 549.60 C453.55 551.00 454.78 553.08 456.20 550.40 C457.62 547.72 458.95 539.42 460.50 533.50 C462.05 527.58 463.82 517.15 465.50 514.90 C467.18 512.65 469.18 518.02 470.60 520.00 C472.02 521.98 472.87 526.67 474.00 526.80 C475.13 526.93 476.27 519.97 477.40 520.80 C478.53 521.63 478.83 528.42 480.80 531.80 C482.77 535.18 486.67 543.07 489.20 541.10 C491.73 539.13 494.17 525.22 496.00 520.00 C497.83 514.78 499.22 515.73 500.20 509.80 C501.18 503.87 501.33 491.87 501.90 484.40 C502.47 476.93 503.03 461.60 503.60 465.00 C504.17 468.40 504.73 494.80 505.30 504.80 C505.87 514.80 506.30 520.50 507.00 525.00 C507.70 529.50 508.23 531.80 509.50 531.80 C510.77 531.80 513.33 529.50 514.60 525.00 C515.87 520.50 516.12 507.75 517.10 504.80 C518.08 501.85 519.50 508.43 520.50 507.30 C521.50 506.17 522.12 497.58 523.10 498.00 C524.08 498.42 525.00 509.10 526.40 509.80 C527.80 510.50 529.93 507.00 531.50 502.20 C533.07 497.40 534.53 488.47 535.80 481.00 C537.07 473.53 538.12 466.83 539.10 457.40 C540.08 447.97 541.05 423.83 541.70 424.40 C542.35 424.97 542.43 452.77 543.00 460.80 C543.57 468.83 544.33 464.15 545.10 472.60 C545.87 481.05 546.77 505.30 547.60 511.50 C548.43 517.70 548.97 514.03 550.10 509.80 C551.23 505.57 553.27 485.82 554.40 486.10 C555.53 486.38 555.92 503.88 556.90 511.50 C557.88 519.12 558.88 526.15 560.30 531.80 C561.72 537.45 563.43 542.30 565.40 545.40 C567.37 548.50 569.28 549.28 572.10 550.40 C574.92 551.52 579.75 551.25 582.30 552.10 C584.85 552.95 586.12 555.30 587.40 555.50 C588.68 555.70 588.65 553.78 590.00 553.30 C591.35 552.82 594.37 552.03 595.50 552.60 C596.63 553.17 595.67 556.47 596.80 556.70 C597.93 556.93 600.70 553.65 602.30 554.00 C603.90 554.35 605.03 558.68 606.40 558.80 C607.77 558.92 608.68 555.38 610.50 554.70 C612.32 554.02 615.60 555.05 617.30 554.70 C619.00 554.35 619.33 552.27 620.70 552.60 C622.07 552.93 624.02 556.82 625.50 556.70 C626.98 556.58 628.23 551.55 629.60 551.90 C630.97 552.25 632.12 558.12 633.70 558.80 C635.28 559.48 637.28 559.08 639.10 556.00 C640.92 552.92 642.77 540.75 644.60 540.30 C646.43 539.85 648.73 551.13 650.10 553.30 C651.47 555.47 650.98 555.58 652.80 553.30 C654.62 551.02 658.73 542.10 661.00 539.60 C663.27 537.10 664.82 538.07 666.40 538.30 C667.98 538.53 668.90 542.72 670.50 541.00 C672.10 539.28 673.95 530.73 676.00 528.00 C678.05 525.27 681.20 528.80 682.80 524.60 C684.40 520.40 684.47 508.48 685.60 502.80 C686.73 497.12 688.35 491.42 689.60 490.50 C690.85 489.58 691.95 490.02 693.10 497.30 C694.25 504.58 695.03 530.55 696.50 534.20 C697.97 537.85 699.85 518.63 701.90 519.20 C703.95 519.77 706.87 535.33 708.80 537.60 C710.73 539.87 711.47 531.78 713.50 532.80 C715.53 533.82 718.83 542.10 721.00 543.70 C723.17 545.30 725.13 541.72 726.50 542.40 C727.87 543.08 727.60 547.80 729.20 547.80 C730.80 547.80 734.05 543.77 736.10 542.40 C738.15 541.03 739.92 545.52 741.50 539.60 C743.08 533.68 744.35 512.80 745.60 506.90 C746.85 501.00 748.08 502.83 749.00 504.20 C749.92 505.57 750.53 523.63 751.10 515.10 C751.67 506.57 751.83 454.37 752.40 453.00 C752.97 451.63 754.15 497.92 754.50 506.90" fill="none" stroke="#96d98d" stroke-width="2" stroke-linejoin="round"/><path d="M141.50 502.60 C154.58 502.63 204.68 503.33 220.00 502.80 C233.40 502.27 225.30 500.25 233.40 499.40 C241.50 498.55 262.17 498.35 268.60 497.70 C272.00 497.05 268.60 496.05 272.00 495.50 C278.98 494.95 303.52 494.95 310.50 494.40 C313.90 493.85 310.50 492.82 313.90 492.20 C318.93 491.58 335.68 491.32 340.70 490.70 C344.00 490.08 340.70 489.15 344.00 488.50 C347.63 487.85 358.85 487.35 362.50 486.80 C365.90 486.25 362.50 485.62 365.90 485.20 C369.82 484.78 382.10 484.87 386.00 484.30 C389.30 483.73 387.35 482.63 389.30 481.80 C391.25 480.97 392.95 480.98 397.70 479.30 C402.45 477.62 412.63 473.67 417.80 471.70 C422.97 469.73 425.83 468.05 428.70 467.50 C431.57 466.95 432.25 467.40 435.00 468.40 C437.75 469.40 441.23 471.40 445.20 473.50 C449.17 475.60 455.13 480.17 458.80 481.00 C462.47 481.83 463.53 478.92 467.20 478.50 C470.87 478.08 477.13 478.08 480.80 478.50 C484.47 478.92 486.10 480.58 489.20 481.00 C492.30 481.42 496.58 481.98 499.40 481.00 C502.22 480.02 503.57 475.65 506.10 475.10 C508.63 474.55 511.48 477.83 514.60 477.70 C517.72 477.57 521.42 475.00 524.80 474.30 C528.18 473.60 531.67 475.75 534.90 473.50 C538.13 471.25 540.82 462.22 544.20 460.80 C547.58 459.38 551.12 462.88 555.20 465.00 C559.28 467.12 562.78 470.27 568.70 473.50 C574.62 476.73 584.87 482.37 590.70 484.40 C596.53 486.43 601.08 485.13 603.70 485.70 C606.32 486.27 603.70 487.23 606.40 487.80 C610.03 488.37 621.63 488.53 625.50 489.10 C629.37 489.67 625.50 490.85 629.60 491.20 C636.18 491.55 657.95 491.65 665.00 491.20 C671.90 490.75 668.70 489.18 671.90 488.50 C675.10 487.82 680.78 488.35 684.20 487.10 C687.62 485.85 689.22 482.02 692.40 481.00 C695.58 479.98 699.43 480.43 703.30 481.00 C707.17 481.57 711.05 483.62 715.60 484.40 C720.15 485.18 727.18 485.02 730.60 485.70 C734.02 486.38 733.60 488.15 736.10 488.50 C738.60 488.85 743.57 488.38 745.60 487.80 C747.63 487.22 746.70 485.80 748.30 485.00 C749.90 484.20 754.05 483.33 755.20 483.00" fill="none" stroke="#cd2a1a" stroke-width="2.4" stroke-linejoin="round"/><path d="M141.50 505.80 C152.25 505.80 194.58 505.57 206.00 505.80 C210.00 506.03 207.33 507.03 210.00 507.20 C212.67 507.37 216.17 506.83 222.00 506.80 C227.83 506.77 228.57 507.25 245.00 507.00 C261.43 506.75 305.20 505.80 320.60 505.30 C336.00 504.80 327.62 504.42 337.40 504.00 C347.18 503.58 368.13 503.20 379.30 502.80 C390.47 502.40 395.95 501.83 404.40 501.60 C412.85 501.37 421.50 500.87 430.00 501.40 C438.50 501.93 446.93 504.52 455.40 504.80 C463.87 505.08 472.90 503.67 480.80 503.10 C488.70 502.53 492.93 501.97 502.80 501.40 C512.67 500.83 531.55 499.70 540.00 499.70 C548.45 499.70 548.72 500.70 553.50 501.40 C558.28 502.10 560.95 503.40 568.70 503.90 C576.45 504.40 589.62 504.25 600.00 504.40 C610.38 504.55 619.02 504.83 631.00 504.80 C642.98 504.77 662.13 504.77 671.90 504.20 C681.67 503.63 678.22 501.52 689.60 501.40 C700.98 501.28 729.50 503.62 740.20 503.50 C750.90 503.38 751.53 501.17 753.80 500.70" fill="none" stroke="#5a9edb" stroke-width="2.2" stroke-linejoin="round"/><path d="M243.5 560.3 L247.5 558.7 L251.5 557.2 L255.5 555.7 L259.5 554.1 L263.5 552.5 L267.5 551.0 L271.5 549.4 L275.5 547.8 L279.5 546.3 L283.5 544.7 L287.5 543.1 L291.5 541.5 L295.5 539.9 L299.5 538.3 L303.5 536.7 L307.5 535.0 L311.5 533.4 L315.5 531.8 L319.5 530.2 L323.5 528.5 L327.5 526.9 L331.5 525.2 L335.5 523.6 L339.5 522.0 L343.5 520.3 L347.5 518.6 L351.5 517.0 L355.5 515.3 L359.5 513.7 L363.5 512.0 L367.5 510.3 L371.5 508.7 L375.5 507.0 L379.5 505.3 L383.5 503.7 L387.5 502.0 L391.5 500.3 L395.5 498.6 L399.5 497.0 L403.5 495.3 L407.5 493.6 L411.5 491.9 L415.5 490.3 L419.5 488.6 L423.5 486.9 L427.5 485.2 L431.5 483.6 L435.5 481.9 L439.5 480.2 L443.5 478.5 L447.5 476.9 L451.5 475.2 L455.5 473.5 L459.5 471.9 L463.5 470.2 L467.5 468.6 L471.5 466.9 L475.5 465.3 L479.5 463.6 L483.5 462.0 L487.5 460.4 L491.5 458.8 L495.5 457.1 L499.5 455.5 L503.5 453.9 L507.5 452.3 L511.5 450.7 L515.5 449.2 L519.5 447.6 L523.5 446.0 L527.5 444.5 L531.5 442.9 L535.5 441.4 L539.5 439.9 L543.5 438.4 L547.5 436.9 L551.5 435.4 L555.5 434.0 L559.5 432.5 L563.5 431.1 L567.5 429.7 L571.5 428.4 L575.5 427.0 L579.5 425.7 L583.5 424.4 L587.5 423.1 L591.5 421.9 L595.5 420.7 L599.5 419.5 L603.5 418.4 L607.5 417.3 L611.5 416.3 L615.5 415.2 L619.5 414.3 L623.5 413.4 L627.5 412.5 L631.5 411.7 L635.5 411.0 L639.5 410.3 L643.5 409.7 L647.5 409.1 L651.5 408.6 L655.5 408.2 L659.5 407.8 L663.5 407.6 L667.5 407.4 L671.5 407.2 L675.5 407.2 L679.5 407.2 L683.5 407.3 L687.5 407.5 L691.5 407.8 L695.5 408.1 L699.5 408.5 L703.5 409.0 L707.5 409.5 L711.5 410.1 L715.5 410.8 L719.5 411.5 L723.5 412.3 L727.5 413.2 L731.5 414.1 L735.5 415.0 L739.5 416.0 L743.5 417.0 L747.5 418.1 L751.5 419.2 L755.5 420.4 L759.5 421.6 L763.5 422.8 L767.5 424.1 L771.5 425.4 L775.5 426.7 L779.5 428.0 L783.5 429.4 L787.5 430.8 L791.5 432.2 L795.5 433.6 L799.5 435.1 L803.5 436.5 L807.5 438.0 L811.5 439.5 L815.5 441.0 L819.5 442.5 L823.5 444.1 L827.5 445.6 L831.5 447.2 L835.5 448.8 L839.5 450.3 L843.5 451.9 L847.5 453.5 L851.5 455.1 L855.5 456.7 L859.5 458.3 L863.5 460.0 L867.5 461.6 L871.5 463.2 L875.5 464.9 L879.5 466.5 L883.5 468.2 L887.5 469.8 L891.5 471.5 L895.5 473.1 L899.5 474.8 L903.5 476.5 L907.5 478.1 L911.5 479.8 L915.5 481.5 L919.5 483.1 L923.5 484.8 L927.5 486.5 L931.5 488.2 L935.5 489.8 L939.5 491.5 L943.5 493.2 L947.5 494.9 L951.5 496.5 L955.5 498.2 L959.5 499.9 L963.5 501.6 L967.5 503.2 L971.5 504.9 L975.5 506.6 L979.5 508.3 L983.5 509.9 L987.5 511.6 L991.5 513.2 L995.5 514.9 L999.5 516.6 L1003.5 518.2 L1007.5 519.9 L1011.5 521.5 L1015.5 523.2 L1019.5 524.8 L1023.5 526.5 L1027.5 528.1 L1031.5 529.7 L1035.5 531.4 L1039.5 533.0 L1043.5 534.6 L1047.5 536.2 L1051.5 537.9 L1055.5 539.5 L1059.5 541.1 L1063.5 542.7 L1067.5 544.3 L1071.5 545.9 L1075.5 547.4 L1079.5 549.0 L1083.5 550.6 L1087.5 552.2 L1091.5 553.7 L1095.5 555.3 L1099.5 556.8 L1103.5 558.4 L1107.5 559.9" fill="none" stroke="#f0c032" stroke-width="2.4" stroke-dasharray="9 11" stroke-linecap="round"/><rect x="94.7" y="598.6" width="13" height="4" fill="#96d98d"/><text x="111.7" y="604.9" font-family="Liberation Sans" font-size="12" fill="#d8d9da">Solarleistung</text><rect x="1053" y="598.6" width="13" height="4" fill="#5a9edb"/><text x="1070" y="604.9" font-family="Liberation Sans" font-size="12" fill="#d8d9da">Batteriespannung</text><rect x="1173" y="598.6" width="13" height="4" fill="#cd2a1a"/><text x="1190" y="604.9" font-family="Liberation Sans" font-size="12" fill="#d8d9da">Regler-Temperatur</text></svg></div>
<div class="panel" style="left:76px;top:641px;width:453px;height:258px;"><div class="ttl">aktuelle Werte</div><div class="a" style="left:0;top:27.5px;width:451px;height:190px;background:#161719"></div><div class="a" style="left:0;top:29.5px;width:451px;height:21.5px;background:linear-gradient(135deg,#2f2f32,#262628)"></div><div class="t" style="left:15px;top:34px;font-size:12.7px;line-height:15px;color:#3aaee2;-webkit-text-stroke:0.55px #3aaee2">Bezeichnung</div><div class="t" style="left:359px;top:34px;font-size:12.7px;line-height:15px;color:#3aaee2;-webkit-text-stroke:0.55px #3aaee2">W / Wh</div><div class="a" style="left:0;top:56px;width:343px;height:30px;background:#d77628"></div><div class="a" style="left:345px;top:56px;width:106px;height:30px;background:#d77628"></div><div class="t" style="left:15px;top:62.5px;font-size:13px;line-height:16px;letter-spacing:-0.3px;color:#fff;-webkit-text-stroke:0.2px #fff">Erzeugte Leistung von Heute in Wh</div><div class="t" style="left:359px;top:62.5px;font-size:13px;line-height:16px;letter-spacing:-0.2px;color:#fff;-webkit-text-stroke:0.2px #fff">4100</div><div class="a" style="left:0;top:88px;width:343px;height:30px;background:#e03434"></div><div class="a" style="left:345px;top:88px;width:106px;height:30px;background:#e03434"></div><div class="t" style="left:15px;top:94.5px;font-size:13px;line-height:16px;letter-spacing:-0.3px;color:#fff;-webkit-text-stroke:0.2px #fff">Spitzenleistung Heute in Watt</div><div class="t" style="left:359px;top:94.5px;font-size:13px;line-height:16px;letter-spacing:-0.2px;color:#fff;-webkit-text-stroke:0.2px #fff">2388</div><div class="a" style="left:0;top:120.5px;width:343px;height:30px;background:#e03434"></div><div class="a" style="left:345px;top:120.5px;width:106px;height:30px;background:#e03434"></div><div class="t" style="left:15px;top:127.0px;font-size:13px;line-height:16px;letter-spacing:-0.3px;color:#fff;-webkit-text-stroke:0.2px #fff">Homematic. 80 L Wasserboiler</div><div class="t" style="left:359px;top:127.0px;font-size:13px;line-height:16px;letter-spacing:-0.2px;color:#fff;-webkit-text-stroke:0.2px #fff">AUS</div><div class="a" style="left:0;top:153px;width:343px;height:30px;background:#e03434"></div><div class="a" style="left:345px;top:153px;width:106px;height:30px;background:#e03434"></div><div class="t" style="left:15px;top:159.5px;font-size:13px;line-height:16px;letter-spacing:-0.3px;color:#fff;-webkit-text-stroke:0.2px #fff">Homematic. Elektroheizung</div><div class="t" style="left:359px;top:159.5px;font-size:13px;line-height:16px;letter-spacing:-0.2px;color:#fff;-webkit-text-stroke:0.2px #fff">AUS</div><div class="a" style="left:0;top:185.5px;width:343px;height:30px;background:#e03434"></div><div class="a" style="left:345px;top:185.5px;width:106px;height:30px;background:#e03434"></div><div class="t" style="left:15px;top:192.0px;font-size:13px;line-height:16px;letter-spacing:-0.3px;color:#fff;-webkit-text-stroke:0.2px #fff">Homematic. Gasheizung</div><div class="t" style="left:359px;top:192.0px;font-size:13px;line-height:16px;letter-spacing:-0.2px;color:#fff;-webkit-text-stroke:0.2px #fff">AUS</div></div>
<div class="panel" style="left:537px;top:641px;width:146px;height:220px;background:#ff7a0c;border-color:#161719"><div class="t" style="left:0;right:0;top:40px;text-align:center;font-size:18px;line-height:19px;font-weight:bold;color:#e8dcd2">aktuelle<br>Außen-<br>temperatur</div><div class="t" style="left:0;right:0;top:113px;text-align:center;font-size:26px;line-height:30px;font-weight:bold;color:#e8dcd2">18.1 °C</div><div class="t" style="left:0;right:0;top:159px;text-align:center;font-size:18px;line-height:22px;font-weight:bold;color:#e8dcd2">Mallorca</div></div>
<div class="panel" style="left:690px;top:641px;width:606px;height:220px;"><div class="ttl">Tagesleistung</div><svg class="a" style="left:0;top:0" width="604" height="218" viewBox="691 642 604 218"><line x1="774.1" y1="823.3" x2="1273.4" y2="823.3" stroke="#525255" stroke-width="1"/><line x1="774.1" y1="789.3" x2="1273.4" y2="789.3" stroke="#525255" stroke-width="1"/><line x1="774.1" y1="755.3" x2="1273.4" y2="755.3" stroke="#525255" stroke-width="1"/><line x1="774.1" y1="721.3" x2="1273.4" y2="721.3" stroke="#525255" stroke-width="1"/><line x1="774.1" y1="687.3" x2="1273.4" y2="687.3" stroke="#525255" stroke-width="1"/><line x1="816.6" y1="687.3" x2="816.6" y2="823.3" stroke="#525255" stroke-width="1"/><line x1="870.1" y1="687.3" x2="870.1" y2="823.3" stroke="#525255" stroke-width="1"/><line x1="923.6" y1="687.3" x2="923.6" y2="823.3" stroke="#525255" stroke-width="1"/><line x1="977.1" y1="687.3" x2="977.1" y2="823.3" stroke="#525255" stroke-width="1"/><line x1="1030.6" y1="687.3" x2="1030.6" y2="823.3" stroke="#525255" stroke-width="1"/><line x1="1084.0" y1="687.3" x2="1084.0" y2="823.3" stroke="#525255" stroke-width="1"/><line x1="1137.5" y1="687.3" x2="1137.5" y2="823.3" stroke="#525255" stroke-width="1"/><line x1="1191.0" y1="687.3" x2="1191.0" y2="823.3" stroke="#525255" stroke-width="1"/><line x1="1244.5" y1="687.3" x2="1244.5" y2="823.3" stroke="#525255" stroke-width="1"/><rect x="776.0" y="753.3" width="12" height="70.0" fill="#eab839"/><rect x="793.8" y="737.6" width="12" height="85.7" fill="#eab839"/><rect x="811.7" y="772.3" width="12" height="51.0" fill="#eab839"/><rect x="829.5" y="802.2" width="12" height="21.1" fill="#eab839"/><rect x="847.3" y="709.7" width="12" height="113.6" fill="#eab839"/><rect x="865.1" y="730.1" width="12" height="93.2" fill="#eab839"/><rect x="883.0" y="733.5" width="12" height="89.8" fill="#eab839"/><rect x="900.8" y="736.3" width="12" height="87.0" fill="#eab839"/><rect x="918.6" y="749.9" width="12" height="73.4" fill="#eab839"/><rect x="936.5" y="732.9" width="12" height="90.4" fill="#eab839"/><rect x="954.3" y="744.4" width="12" height="78.9" fill="#eab839"/><rect x="972.1" y="733.5" width="12" height="89.8" fill="#eab839"/><rect x="990.0" y="742.4" width="12" height="80.9" fill="#eab839"/><rect x="1007.8" y="734.9" width="12" height="88.4" fill="#eab839"/><rect x="1025.6" y="728.1" width="12" height="95.2" fill="#eab839"/><rect x="1043.5" y="730.1" width="12" height="93.2" fill="#eab839"/><rect x="1061.3" y="727.4" width="12" height="95.9" fill="#eab839"/><rect x="1079.1" y="743.7" width="12" height="79.6" fill="#eab839"/><rect x="1096.9" y="753.3" width="12" height="70.0" fill="#eab839"/><rect x="1114.8" y="746.5" width="12" height="76.8" fill="#eab839"/><rect x="1132.6" y="752.6" width="12" height="70.7" fill="#eab839"/><rect x="1150.4" y="751.9" width="12" height="71.4" fill="#eab839"/><rect x="1168.3" y="758.0" width="12" height="65.3" fill="#eab839"/><rect x="1186.1" y="767.5" width="12" height="55.8" fill="#eab839"/><rect x="1203.9" y="722.7" width="12" height="100.6" fill="#eab839"/><rect x="1221.8" y="747.8" width="12" height="75.5" fill="#eab839"/><rect x="1239.6" y="741.0" width="12" height="82.3" fill="#eab839"/><rect x="1257.4" y="794.7" width="12" height="28.6" fill="#eab839"/><text x="768" y="827.4" text-anchor="end" font-family="Liberation Sans" font-size="11.5" fill="#d8d9da">0 Wh</text><text x="768" y="793.4" text-anchor="end" font-family="Liberation Sans" font-size="11.5" fill="#d8d9da">5.0 kWh</text><text x="768" y="759.4" text-anchor="end" font-family="Liberation Sans" font-size="11.5" fill="#d8d9da">10.0 kWh</text><text x="768" y="725.4" text-anchor="end" font-family="Liberation Sans" font-size="11.5" fill="#d8d9da">15.0 kWh</text><text x="768" y="691.4" text-anchor="end" font-family="Liberation Sans" font-size="11.5" fill="#d8d9da">20.0 kWh</text><text x="816.6" y="842.3" text-anchor="middle" font-family="Liberation Sans" font-size="11.5" fill="#d8d9da">4/19</text><text x="870.1" y="842.3" text-anchor="middle" font-family="Liberation Sans" font-size="11.5" fill="#d8d9da">4/22</text><text x="923.6" y="842.3" text-anchor="middle" font-family="Liberation Sans" font-size="11.5" fill="#d8d9da">4/25</text><text x="977.1" y="842.3" text-anchor="middle" font-family="Liberation Sans" font-size="11.5" fill="#d8d9da">4/28</text><text x="1030.6" y="842.3" text-anchor="middle" font-family="Liberation Sans" font-size="11.5" fill="#d8d9da">5/1</text><text x="1084.0" y="842.3" text-anchor="middle" font-family="Liberation Sans" font-size="11.5" fill="#d8d9da">5/4</text><text x="1137.5" y="842.3" text-anchor="middle" font-family="Liberation Sans" font-size="11.5" fill="#d8d9da">5/7</text><text x="1191.0" y="842.3" text-anchor="middle" font-family="Liberation Sans" font-size="11.5" fill="#d8d9da">5/10</text><text x="1244.5" y="842.3" text-anchor="middle" font-family="Liberation Sans" font-size="11.5" fill="#d8d9da">5/13</text><text transform="translate(712 762.5) rotate(-90)" text-anchor="middle" font-family="Liberation Sans" font-size="12" fill="#d8d9da">pro Tag</text><circle cx="1209" cy="655.7" r="4.3" fill="none" stroke="#3aaee2" stroke-width="1.5"/><path d="M1209 652.8 V656.4 H1206.8" fill="none" stroke="#3aaee2" stroke-width="1.2"/><text x="1217" y="660" font-family="Liberation Sans" font-size="12" fill="#3aaee2" stroke="#3aaee2" stroke-width="0.45">Last 4 weeks</text></svg></div>
<svg class="a" style="left:0;top:0;z-index:20" width="1312" height="916" viewBox="0 0 1312 916">
<path d="M740.2 230.9 L812 71" stroke="#f80d0d" stroke-width="4.8" stroke-linecap="round"/>
<path d="M823.2 46.3 L799.1 65.3 L825.5 76.8Z" fill="#f80d0d" stroke="#f80d0d" stroke-width="1" stroke-linejoin="round"/>
</svg>
</body></html>
